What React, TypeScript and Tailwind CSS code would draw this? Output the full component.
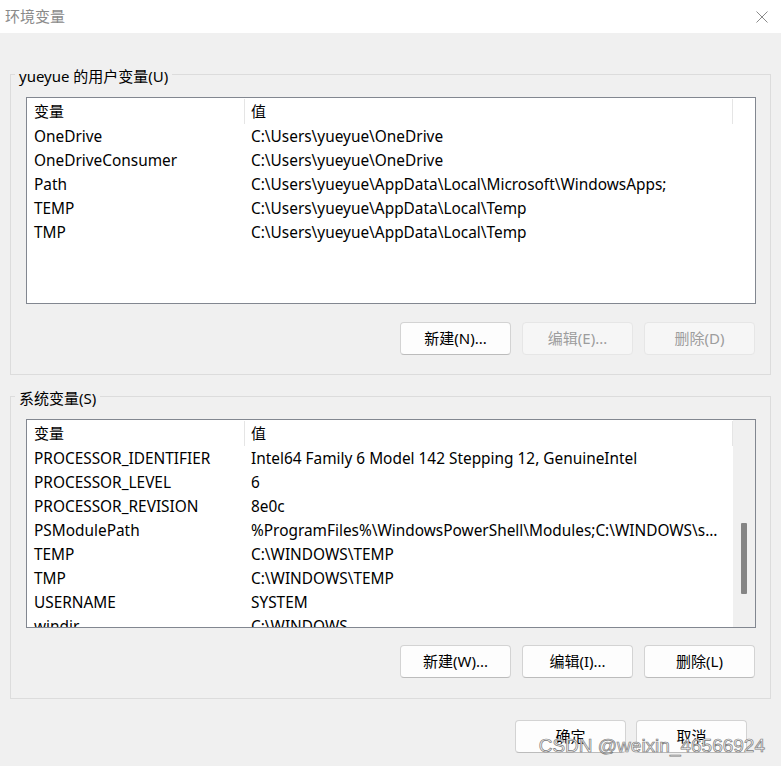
import type { ReactNode } from "react"

const font = {
  fontFamily: '"Noto Sans", "Noto Sans CJK SC", sans-serif',
}

const userVars: [string, string][] = [
  ["OneDrive", "C:\\Users\\yueyue\\OneDrive"],
  ["OneDriveConsumer", "C:\\Users\\yueyue\\OneDrive"],
  ["Path", "C:\\Users\\yueyue\\AppData\\Local\\Microsoft\\WindowsApps;"],
  ["TEMP", "C:\\Users\\yueyue\\AppData\\Local\\Temp"],
  ["TMP", "C:\\Users\\yueyue\\AppData\\Local\\Temp"],
]

const systemVars: [string, string][] = [
  ["PROCESSOR_IDENTIFIER", "Intel64 Family 6 Model 142 Stepping 12, GenuineIntel"],
  ["PROCESSOR_LEVEL", "6"],
  ["PROCESSOR_REVISION", "8e0c"],
  [
    "PSModulePath",
    "%ProgramFiles%\\WindowsPowerShell\\Modules;C:\\WINDOWS\\system32\\WindowsPowerShell\\v1.0\\Modules",
  ],
  ["TEMP", "C:\\WINDOWS\\TEMP"],
  ["TMP", "C:\\WINDOWS\\TEMP"],
  ["USERNAME", "SYSTEM"],
  ["windir", "C:\\WINDOWS"],
]

function Button({
  children,
  disabled,
}: {
  children: ReactNode
  disabled?: boolean
}) {
  return (
    <button
      disabled={disabled}
      className={
        disabled
          ? "h-[33px] w-[111px] rounded-[4px] border border-[#e6e6e6] bg-[#f6f6f6] text-[15px] text-[#9d9d9d]"
          : "h-[33px] w-[111px] rounded-[4px] border border-[#d3d3d3] border-b-[#bcbcbc] bg-[#fdfdfd] text-[15px] text-black"
      }
    >
      {children}
    </button>
  )
}

function VarList({
  rows,
  height,
  scroll,
}: {
  rows: [string, string][]
  height: string
  scroll?: boolean
}) {
  return (
    <div
      className={`ml-[15px] mt-[12px] flex w-[730px] overflow-hidden border border-[#828790] bg-white ${height}`}
    >
      <div className="min-w-0 flex-1">
        <div className="flex h-[27px] items-center text-[15px]">
          <div className="flex h-[25px] w-[218px] items-center border-r border-[#e5e5e5] pl-[7px]">
            变量
          </div>
          <div className="flex h-[25px] flex-1 items-center border-r border-[#e5e5e5] pl-[6px]">
            值
          </div>
        </div>
        {rows.map(([name, value]) => (
          <div key={name} className="flex h-[24px] items-center text-[15.4px]">
            <div className="w-[218px] truncate pl-[7px]">{name}</div>
            <div className="min-w-0 flex-1 truncate pl-[6px] pr-[12px]">
              {value}
            </div>
          </div>
        ))}
      </div>
      <div
        className={`flex w-[22px] shrink-0 flex-col ${scroll ? "bg-[#f0f0f0]" : "bg-white"}`}
      >
        {scroll && (
          <div className="ml-[8px] mt-[103px] h-[71px] w-[6px] rounded-[1px] bg-[#858585]" />
        )}
      </div>
    </div>
  )
}

function Group({
  label,
  children,
  className,
}: {
  label: string
  children: ReactNode
  className?: string
}) {
  return (
    <div
      className={`mx-[10px] w-[761px] border border-[#dcdcdc] ${className ?? ""}`}
    >
      <div className="-mt-[11px] ml-[4px] h-[21px]">
        <span className="bg-[#f0f0f0] px-[4px] text-[15px] leading-[21px]">
          {label}
        </span>
      </div>
      {children}
    </div>
  )
}

export default function App() {
  return (
    <div
      className="relative h-[766px] w-[781px] overflow-hidden bg-[#f0f0f0] text-black"
      style={font}
    >
      {/* title bar */}
      <div className="flex h-[33px] items-center justify-between bg-white pl-[5px] pr-[11px]">
        <span className="text-[15px] text-[#8a8a8a]">环境变量</span>
        <svg width="12" height="12" viewBox="0 0 12 12" className="mr-[2px]">
          <path d="M0.5 0.5 L11.5 11.5 M11.5 0.5 L0.5 11.5" stroke="#8a8a8a" strokeWidth="1" />
        </svg>
      </div>

      <Group label="yueyue 的用户变量(U)" className="mt-[41px] pb-[19px]">
        <VarList rows={userVars} height="h-[207px]" />
        <div className="mt-[18px] flex justify-end gap-[11px] pr-[15px]">
          <Button>新建(N)...</Button>
          <Button disabled>编辑(E)...</Button>
          <Button disabled>删除(D)</Button>
        </div>
      </Group>

      <Group label="系统变量(S)" className="mt-[21px] pb-[20px]">
        <VarList rows={systemVars} height="h-[209px]" scroll />
        <div className="mt-[17px] flex justify-end gap-[11px] pr-[15px]">
          <Button>新建(W)...</Button>
          <Button>编辑(I)...</Button>
          <Button>删除(L)</Button>
        </div>
      </Group>

      <div className="mt-[21px] flex justify-end gap-[10px] pr-[34px]">
        <Button>确定</Button>
        <Button>取消</Button>
      </div>

      {/* watermark */}
      <div
        className="absolute bottom-[6px] right-[16px] text-[19px] text-[#f8f8f8] [-webkit-text-stroke:0.7px_#7a7a7a]"
        style={{ fontFamily: '"Liberation Sans", Arial, sans-serif' }}
      >
        CSDN @weixin_46566924
      </div>
    </div>
  )
}
